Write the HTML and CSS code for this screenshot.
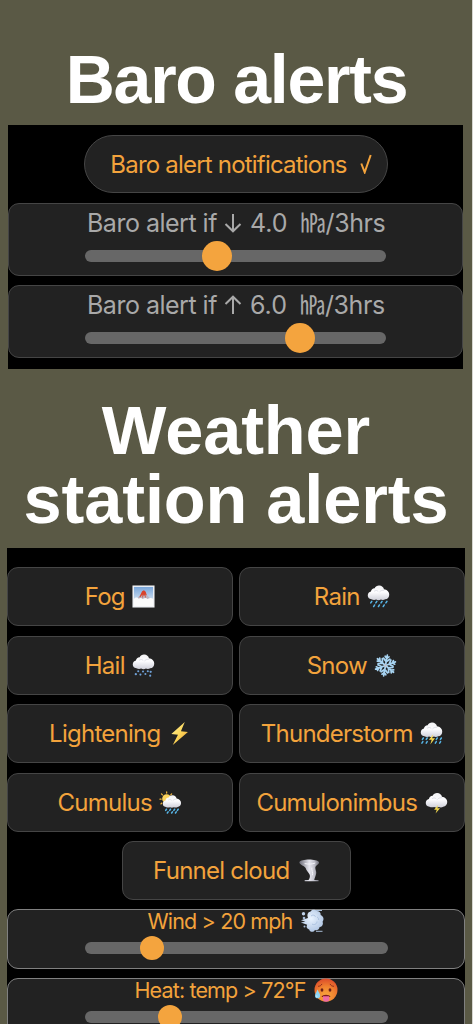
FILE: index.html
```
<!DOCTYPE html>
<html lang="en">

<head>
    <meta charset="UTF-8">
    <meta name="viewport" content="width=device-width, initial-scale=1.0">
    <title>Weather alerts</title>
    <link rel="stylesheet" href="styles.css">
</head>

<body>
    <!-- Shared icon shapes -->
    <svg class="defs" width="0" height="0">
        <defs>
            <linearGradient id="cloudFill" x1="0" y1="0" x2="0" y2="1">
                <stop offset="0" stop-color="#f2f2f4" />
                <stop offset=".45" stop-color="#fdfdff" />
                <stop offset="1" stop-color="#cfd0da" />
            </linearGradient>
            <linearGradient id="boltFill" x1="0" y1="0" x2="1" y2="1">
                <stop offset="0" stop-color="#fff2a0" />
                <stop offset=".5" stop-color="#fcd75a" />
                <stop offset="1" stop-color="#e8962c" />
            </linearGradient>
            <linearGradient id="skyFill" x1="0" y1="0" x2="0" y2="1">
                <stop offset="0" stop-color="#79a6da" />
                <stop offset=".7" stop-color="#cfdff0" />
            </linearGradient>
            <linearGradient id="funnelFill" x1="0" y1="0" x2="1" y2="0">
                <stop offset="0" stop-color="#6d6d78" />
                <stop offset=".5" stop-color="#e6e6ee" />
                <stop offset=".75" stop-color="#c2c2cc" />
                <stop offset="1" stop-color="#6d6d76" />
            </linearGradient>
            <radialGradient id="hotFill" cx=".5" cy=".75" r=".8">
                <stop offset="0" stop-color="#f9a83f" />
                <stop offset=".5" stop-color="#f0812f" />
                <stop offset="1" stop-color="#d8432a" />
            </radialGradient>
            <radialGradient id="puffFill" cx=".45" cy=".4" r=".7">
                <stop offset="0" stop-color="#e9f3ff" />
                <stop offset="1" stop-color="#a9c0e0" />
            </radialGradient>
            <g id="cloud">
                <path fill="url(#cloudFill)" d="M4.6 14.9C2 14.7.8 13 .8 11c0-2.300 1.500-3.800 3.300-4.100C4.400 4.700 6 3.300 8 3.400 8.900 1.400 10.700.4 12.800.5c2.600.1 4.500 1.700 4.900 4 3 .3 5.500 2.500 5.500 5.600 0 2.700-1.800 4.600-4.200 4.800-1.300.9-3.200.9-4.500.3-1.500.8-3.500.8-4.900 0-1.500.5-3.500.5-5-.3z" />
                <path fill="none" stroke="#d4d5de" stroke-width=".8" d="M7.500 6.500c1.500-1.200 3.400-.8 4.300.4M13 7.300c1.300-1.500 3-2 4.700-1.800" />
            </g>
        </defs>
    </svg>

    <h1 class="title baro-title">Baro alerts</h1>

    <section class="panel baro-panel">
        <button class="btn pill">
            <span>Baro alert notifications</span>
            <svg class="tick" viewBox="0 0 12 20"><path d="M1.300 9.500L4.700 18.300 10.700 1" /></svg>
        </button>
        <div class="card baro-card">
            <div class="baro-label"><span class="baro-text">Baro alert if</span><svg class="arrow" viewBox="0 0 18 20"><path d="M9 1v17M1.500 11L9 18.300 16.500 11" /></svg><span>4.0</span><span class="unit">㍱</span><span class="hours">/3hrs</span></div>
            <div class="slider"><span class="thumb" style="left: 132px"></span></div>
        </div>
        <div class="card baro-card">
            <div class="baro-label"><span class="baro-text">Baro alert if</span><svg class="arrow" viewBox="0 0 18 20"><path d="M9 19V2M1.500 9L9 1.700 16.500 9" /></svg><span>6.0</span><span class="unit">㍱</span><span class="hours">/3hrs</span></div>
            <div class="slider"><span class="thumb" style="left: 215px"></span></div>
        </div>
    </section>

    <h1 class="title station-title">Weather<br>station alerts</h1>

    <section class="panel station-panel">
        <div class="btn-grid">
            <button class="btn">
                <span>Fog</span>
                <svg class="icon" viewBox="0 0 24 24">
                    <rect x=".5" y=".5" width="23" height="23" fill="#f2f3f5" />
                    <rect x="2" y="2" width="20" height="20" fill="url(#skyFill)" />
                    <path fill="#b9b3c0" d="M4.500 15l3.500-4 3-4 2 .6 4 4.400 3 3z" />
                    <path fill="#d9432b" d="M10.500 6.500l2-1 1.800 1.500 1.200 4-1.500-1 .5 4-2-4-1.800 4 .2-4-2.500 3-.6-.5 1.500-3.500z" />
                    <path fill="#fbfbfb" d="M2 14.500c2-2 4-1.700 5-.2 1.500-1 3-.8 4.200.4 2-1.500 4-1.200 5 0 2-1.500 4-1.500 5.800-.4V22H2z" />
                </svg>
            </button>
            <button class="btn">
                <span>Rain</span>
                <svg class="icon" viewBox="0 0 24 24">
                    <use href="#cloud" />
                    <path class="rain" d="M5 17l-1.100 1.700M10.300 17l-1.100 1.700M15.700 17l-1.100 1.700M20.800 17l-1.100 1.700M8 20.800l-1.100 1.700M13 20.800l-1.100 1.700M18 20.800l-1.100 1.700" />
                </svg>
            </button>
            <button class="btn">
                <span>Hail</span>
                <svg class="icon" viewBox="0 0 24 24">
                    <use href="#cloud" />
                    <g fill="#6fa0d6">
                        <circle cx="6.500" cy="18" r="1.100" /><circle cx="11.500" cy="18.200" r="1.100" /><circle cx="16.500" cy="18" r="1.100" /><circle cx="19.500" cy="18.600" r="1.200" />
                        <circle cx="4" cy="21" r="1.200" /><circle cx="8.800" cy="21.500" r="1.100" /><circle cx="14" cy="20.800" r="1.100" /><circle cx="19" cy="22.600" r="1.100" />
                    </g>
                </svg>
            </button>
            <button class="btn">
                <span>Snow</span>
                <svg class="icon flake" viewBox="0 0 24 24">
                    <g transform="rotate(10 12 12)">
                        <g id="flakeArm"><path d="M12 12V1M12 8L8.600 4.800M12 8l3.400-3.200M12 4.500L10 2.500M12 4.500l2-2" /></g>
                        <use href="#flakeArm" transform="rotate(60 12 12)" />
                        <use href="#flakeArm" transform="rotate(120 12 12)" />
                        <use href="#flakeArm" transform="rotate(180 12 12)" />
                        <use href="#flakeArm" transform="rotate(240 12 12)" />
                        <use href="#flakeArm" transform="rotate(300 12 12)" />
                    </g>
                    <circle class="flake-core" cx="12" cy="12" r="1.200" />
                </svg>
            </button>
            <button class="btn">
                <span>Lightening</span>
                <svg class="icon" viewBox="0 0 24 24">
                    <path fill="url(#boltFill)" d="M17.500 0L3.500 12.600l6.900.6L5 24 20.800 10.500l-7.300-.8z" />
                </svg>
            </button>
            <button class="btn">
                <span>Thunderstorm</span>
                <svg class="icon" viewBox="0 0 24 24">
                    <use href="#cloud" />
                    <path class="rain" d="M3.500 16.700l-1 1.500M7.500 16.700l-1 1.500M18 16.700l-1 1.500M22.300 16.700l-1 1.500M3 20.500l-1 1.500M7.500 20.500l-1 1.500M17 20.500l-1 1.500M21.500 20.500l-1 1.500" />
                    <path fill="#f8d94a" d="M13.800 13l-4.600 5.500h3l-1.500 5 5-6.500h-3z" />
                </svg>
            </button>
            <button class="btn">
                <span>Cumulus</span>
                <svg class="icon" viewBox="0 0 24 24">
                    <path stroke="#eeb33a" stroke-width="1.300" stroke-linecap="round" d="M8 1v1.200M2.600 3l1 1M13.200 3l-.8.9M1 8.500h1.200M2 13.500l1-.9" />
                    <circle cx="8" cy="8" r="4.700" fill="#fbd35c" />
                    <use href="#cloud" transform="translate(3.300 4) scale(.85)" />
                    <path class="rain" d="M7.800 19l-.8 1.200M12 19l-.8 1.200M16.300 19l-.8 1.200M20 19l-.8 1.200M9.500 21.800l-.8 1.200M14 21.800l-.8 1.200M18 21.800l-.8 1.200" />
                </svg>
            </button>
            <button class="btn">
                <span>Cumulonimbus</span>
                <svg class="icon" viewBox="0 0 24 24">
                    <use href="#cloud" transform="translate(0 1.500)" />
                    <path fill="#f3d94d" d="M13.500 14.500l-4 5h2.800l-1.300 4 4.700-5.500h-2.900z" />
                </svg>
            </button>
        </div>
        <button class="btn funnel-btn">
            <span>Funnel cloud</span>
            <svg class="icon" viewBox="0 0 24 24">
                <path fill="url(#funnelFill)" d="M2.500 3.500C4-.3 21-.3 23 3.500c.3 2.300-3.200 3-3.800 5.200-.4 1.800 1.200 3.800.8 6.300-.4 2.600-1.700 4.500-2 7h4.500v1.200H8V22h4c1.300-1.800 2-4 1-6-1.200-2.500-3.400-3.600-4-6.500-.5-2-6.800-3.500-6.500-6z" />
                <path fill="none" stroke="#f5f5fa" stroke-width="1" d="M8 4.800c4 .8 8 .6 11-.6M15.500 9c-.5 3 1.500 5 .6 8" />
            </svg>
        </button>
        <div class="card range-card">
            <div class="range-label">
                <span>Wind &gt; 20 mph</span>
                <svg class="icon" viewBox="0 0 24 24">
                    <path stroke="#a9bdd6" stroke-width="1" fill="none" d="M14 1.500h8M16 22.300h6.500" />
                    <path fill="url(#puffFill)" d="M8 9C6.500 5.500 8 3 10.300 2.800 11.500.2 15 .2 16.300 2c3-.2 4.700 1.800 4.300 4 3 1.200 3.700 4.500 2 6.700 1 3-.5 5-3 5.300-.4 2.800-3 3.700-4.600 3-1.500 2.800-5.300 2.200-5.800-.5-2.500-.3-3.300-3-2-4.700L.8 13.500l4.600-.8L1 11.300z" />
                    <path fill="none" stroke="#a3bbdc" stroke-width=".8" d="M11 7c1.500-1.500 4-1 4.500.8M12 15c2 1.500 5 0 5-2.500M17 8c1.300.5 1.800 1.800 1.500 3" />
                    <circle cx="3.500" cy="4.800" r="1.700" fill="#bed1ea" /><circle cx="4" cy="9" r="1.300" fill="#a7bcd9" /><circle cx="4.500" cy="17.500" r="1" fill="#a7bcd9" />
                </svg>
            </div>
            <div class="slider"><span class="thumb" style="left: 67px"></span></div>
        </div>
        <div class="card range-card">
            <div class="range-label">
                <span>Heat: temp &gt; 72°F</span>
                <svg class="icon" viewBox="0 0 24 24">
                    <circle cx="12" cy="12" r="11.500" fill="url(#hotFill)" />
                    <path fill="none" stroke="#8a2b1b" stroke-width="1" stroke-linecap="round" d="M4.500 8.300c1.500-.1 2.700-.8 3.300-2M19.500 8.300c-1.500-.1-2.700-.8-3.300-2" />
                    <ellipse cx="8" cy="12" rx="1.400" ry="1.700" fill="#6b1d18" /><ellipse cx="16" cy="12" rx="1.400" ry="1.700" fill="#6b1d18" />
                    <path fill="#7c1d1d" d="M7.500 19c1-3 8-3 9 0z" />
                    <path fill="#ee6aa3" d="M9 18.300h6.200v3.200c0 3-6.200 3-6.200 0z" />
                    <path fill="#8fd6f5" d="M3.500 11.500c1 2.500 2.700 4 2.700 6.200 0 3.500-5.200 3.500-5.200.2 0-2.200 1.700-3.700 2.500-6.400z" />
                    <path fill="#e6f8ff" d="M3 17c-1 .9-.6 2 .3 2.200z" />
                </svg>
            </div>
            <div class="slider"><span class="thumb" style="left: 85px"></span></div>
        </div>
    </section>
</body>

</html>
```
FILE: styles.css
```
* {
    box-sizing: border-box;
}

body {
    margin: 0;
    height: 1024px;
    overflow: hidden;
    background-color: #5a5945;
    border-right: 1px solid #d6d6d1;
    font-family: Inter, Roboto, sans-serif;
}

.defs {
    position: absolute;
}

.title {
    margin: 0;
    color: #fff;
    font-family: "Liberation Sans", Arial, sans-serif;
    font-weight: bold;
    line-height: 69px;
    text-align: center;
    white-space: nowrap;
}

.baro-title {
    height: 125px;
    padding-top: 45px;
    padding-left: 1px;
    font-size: 68px;
    letter-spacing: -1.25px;
}

.station-title {
    height: 179px;
    padding-top: 27px;
    font-size: 68.5px;
    letter-spacing: -0.1px;
}

.panel {
    background-color: #000;
}

.baro-panel {
    width: 455px;
    height: 244px;
    margin-left: 8px;
    padding-top: 10px;
    display: flex;
    flex-direction: column;
    align-items: center;
}

.station-panel {
    width: 458px;
    height: 520px;
    margin-left: 7px;
    padding-top: 19.4px;
}

.btn {
    height: 59px;
    padding: 0;
    display: flex;
    justify-content: center;
    align-items: center;
    gap: 7.5px;
    background-color: #222;
    border: 1px solid #454545;
    border-radius: 11px;
    color: #f3a33c;
    font-family: inherit;
    font-size: 24px;
    letter-spacing: -0.75px;
    white-space: nowrap;
}

.pill {
    width: 304px;
    height: 58px;
    margin-bottom: 10px;
    padding-left: 11px;
    border-radius: 29px;
    gap: 13px;
    letter-spacing: -0.8px;
}

.tick {
    width: 12px;
    height: 20px;
    fill: none;
    stroke: #f3a33c;
    stroke-width: 2;
}

.icon {
    width: 23px;
    height: 23px;
    flex: none;
}

.rain {
    fill: none;
    stroke: #57b5e6;
    stroke-width: 1.6;
    stroke-linecap: round;
}

.flake {
    fill: none;
    stroke: #a8d4f2;
    stroke-width: 1.8;
    stroke-linecap: round;
}

.flake-core {
    fill: #c9bcc0;
    stroke: none;
}

.card {
    background-color: #222;
    border: 1px solid #454545;
    border-radius: 11px;
}

.baro-card {
    width: 455px;
    height: 73px;
    margin-bottom: 9px;
    padding-left: 76px;
}

.baro-label {
    height: 37px;
    padding-left: 2px;
    display: flex;
    align-items: center;
    color: #a9a9a9;
    font-size: 25px;
    white-space: nowrap;
}

.baro-text {
    letter-spacing: -0.5px;
}

.arrow {
    width: 18px;
    height: 20px;
    margin: 0 7.5px;
    fill: none;
    stroke: #a9a9a9;
    stroke-width: 2;
}

.unit {
    margin: -4px 0 0 13px;
    font-family: "Noto Sans CJK JP", sans-serif;
    line-height: 36px;
}

.hours {
    letter-spacing: -0.4px;
}

.slider {
    position: relative;
    width: 301px;
    height: 12px;
    margin-top: 9px;
    border-radius: 6px;
    background-color: #676767;
}

/* left is the centre of the thumb */
.thumb {
    position: absolute;
    top: 50%;
    width: 30px;
    height: 30px;
    border-radius: 50%;
    background-color: #f4a43e;
    transform: translate(-50%, -50%);
}

.btn-grid {
    display: grid;
    grid-template-columns: 226px 226px;
    gap: 9.5px 6px;
}

.funnel-btn {
    width: 229px;
    margin: 9.5px 0 9px 115px;
}

.range-card {
    height: 59.5px;
    margin-bottom: 9px;
    border-color: #808080;
}

.range-label {
    height: 22px;
    display: flex;
    justify-content: center;
    align-items: center;
    gap: 8px;
    color: #f3a33c;
    font-size: 21.5px;
    letter-spacing: -0.85px;
    white-space: nowrap;
}

.range-card .icon {
    width: 24px;
    height: 24px;
}

.range-card .slider {
    width: 303px;
    margin: 10px 0 0 77px;
}

.range-card .thumb {
    width: 24px;
    height: 24px;
}
```
